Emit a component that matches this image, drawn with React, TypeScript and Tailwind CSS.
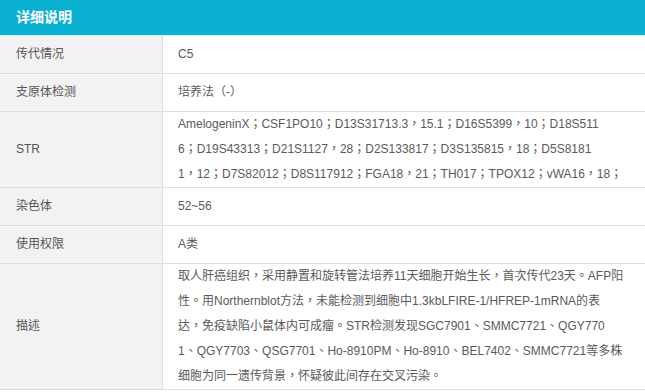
// Each value is kept as the lines it wraps into on the original page.
const rows: { label: string; lines: string[] }[] = [
  { label: '传代情况', lines: ['C5'] },
  { label: '支原体检测', lines: ['培养法（-）'] },
  {
    label: 'STR',
    lines: [
      'AmelogeninX；CSF1PO10；D13S31713.3，15.1；D16S5399，10；D18S511',
      '6；D19S43313；D21S1127，28；D2S133817；D3S135815，18；D5S8181',
      '1，12；D7S82012；D8S117912；FGA18，21；TH017；TPOX12；vWA16，18；',
    ],
  },
  { label: '染色体', lines: ['52~56'] },
  { label: '使用权限', lines: ['A类'] },
  {
    label: '描述',
    lines: [
      '取人肝癌组织，采用静置和旋转管法培养11天细胞开始生长，首次传代23天。AFP阳',
      '性。用Northernblot方法，未能检测到细胞中1.3kbLFIRE-1/HFREP-1mRNA的表',
      '达，免疫缺陷小鼠体内可成瘤。STR检测发现SGC7901、SMMC7721、QGY770',
      '1、QGY7703、QSG7701、Ho-8910PM、Ho-8910、BEL7402、SMMC7721等多株',
      '细胞为同一遗传背景，怀疑彼此间存在交叉污染。',
    ],
  },
]

export default function App() {
  return (
    <div className="w-[645px] h-[392px] overflow-hidden bg-white font-['Liberation_Sans','Noto_Sans_CJK_TC',sans-serif] text-[12px] text-[#555]">
      {/* Header */}
      <div className="h-[36px] bg-[#0ab1d1] border-b border-[#d9f0f3] px-4 flex items-center">
        <h2 className="text-[14px] font-bold text-white">详细说明</h2>
      </div>

      {/* Detail table */}
      <div>
        {rows.map((row) => (
          <div key={row.label} className="flex border-b border-[#dddddd]">
            <div className="w-[163px] shrink-0 bg-[#f2f2f2] border-r border-[#dddddd] px-4 flex items-center min-h-[37px] leading-[25px]">
              {row.label}
            </div>
            <div className="flex-1 px-[15px] flex flex-col justify-center min-h-[37px] leading-[25px] text-[#5a5a5a]">
              {row.lines.map((line, i) => (
                <p key={i} className="whitespace-nowrap">
                  {line}
                </p>
              ))}
            </div>
          </div>
        ))}
      </div>
    </div>
  )
}
